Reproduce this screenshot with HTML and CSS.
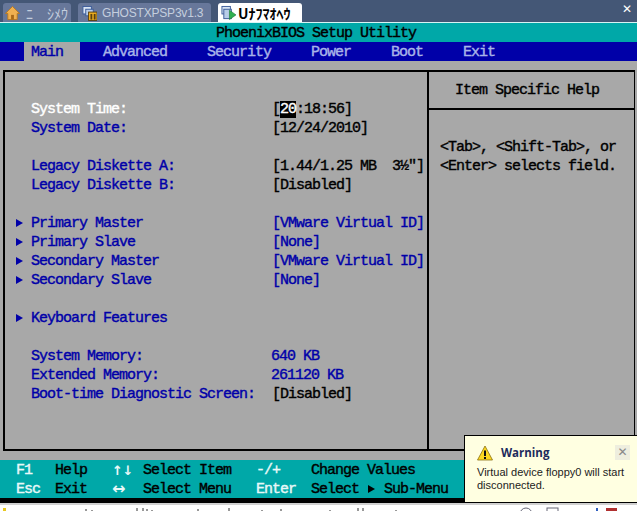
FILE: index.html
```html
<!DOCTYPE html>
<html lang="en">
<head>
    <meta charset="UTF-8">
    <meta name="viewport" content="width=device-width, initial-scale=1.0">
    <title>PhoenixBIOS Setup Utility</title>
    <link rel="stylesheet" href="styles.css">
</head>
<body>
    <div class="tabs">
        <div class="tab">
            <svg class="tab-icon" viewBox="0 0 16 16">
                <path d="M8 1 L15.5 8.5 L13 8.5 L13 15 L3 15 L3 8.5 L0.5 8.5 Z" fill="#f0b050" stroke="#b87a20" stroke-width="1"/>
                <rect x="6.5" y="10" width="3" height="5" fill="#a86818"/>
            </svg>
            <span class="tab-label tab-label-jp">ﾆ　ｼﾒｳ</span>
        </div>
        <div class="tab tab-second">
            <svg class="tab-icon" viewBox="0 0 16 16">
                <rect x="1" y="1" width="9" height="8" fill="#d8e4f4" stroke="#3a5a98"/>
                <rect x="4" y="4" width="8" height="7" fill="#b8cce8" stroke="#3a5a98"/>
                <rect x="7" y="7" width="9" height="9" fill="#f0b020" stroke="#5a4010"/>
                <rect x="9" y="9" width="2" height="6" fill="#5a4010"/>
                <rect x="12.5" y="9" width="2" height="6" fill="#5a4010"/>
            </svg>
            <span class="tab-label">GHOSTXPSP3v1.3</span>
        </div>
        <div class="tab tab-active">
            <svg class="tab-icon" viewBox="0 0 16 16">
                <rect x="1" y="1" width="9" height="8" fill="#d8e4f4" stroke="#3a5a98"/>
                <rect x="3" y="4" width="8" height="10" fill="#b8cce8" stroke="#3a5a98"/>
                <path d="M9 5 L16 10 L9 15 Z" fill="#30b050" stroke="#187030" stroke-width="0.6"/>
            </svg>
            <span class="tab-label">Uﾅﾌﾏｵﾍｳ</span>
        </div>
        <span class="tabs-close">✕</span>
    </div>

    <div class="title">PhoenixBIOS Setup Utility</div>

    <div class="menu">
        <span class="menu-item menu-item-active">Main</span>
        <span class="menu-item">Advanced</span>
        <span class="menu-item">Security</span>
        <span class="menu-item">Power</span>
        <span class="menu-item">Boot</span>
        <span class="menu-item">Exit</span>
    </div>

    <div class="main">
        <div class="panel">
            <div class="fields">
                <div class="row"><span class="label label-current">System Time:</span><span class="value">[<span class="cursor">20</span>:18:56]</span></div>
                <div class="row"><span class="label">System Date:</span><span class="value">[12/24/2010]</span></div>
                <div class="row"></div>
                <div class="row"><span class="label">Legacy Diskette A:</span><span class="value">[1.44/1.25 MB  3½"]</span></div>
                <div class="row"><span class="label">Legacy Diskette B:</span><span class="value">[Disabled]</span></div>
                <div class="row"></div>
                <div class="row"><i class="arrow"></i><span class="label">Primary Master</span><span class="value value-blue">[VMware Virtual ID]</span></div>
                <div class="row"><i class="arrow"></i><span class="label">Primary Slave</span><span class="value value-blue">[None]</span></div>
                <div class="row"><i class="arrow"></i><span class="label">Secondary Master</span><span class="value value-blue">[VMware Virtual ID]</span></div>
                <div class="row"><i class="arrow"></i><span class="label">Secondary Slave</span><span class="value value-blue">[None]</span></div>
                <div class="row"></div>
                <div class="row"><i class="arrow"></i><span class="label">Keyboard Features</span></div>
                <div class="row"></div>
                <div class="row"><span class="label">System Memory:</span><span class="value value-blue value-mem">640 KB</span></div>
                <div class="row"><span class="label">Extended Memory:</span><span class="value value-blue value-mem">261120 KB</span></div>
                <div class="row"><span class="label">Boot-time Diagnostic Screen:</span><span class="value">[Disabled]</span></div>
            </div>
            <div class="help">
                <div class="help-head">Item Specific Help</div>
                <div class="help-body">&lt;Tab&gt;, &lt;Shift-Tab&gt;, or
&lt;Enter&gt; selects field.</div>
            </div>
        </div>
    </div>

    <div class="status">
        <span class="key">F1</span><span>Help</span><span class="key key-arrows">↑↓</span><span>Select Item</span><span class="key">-/+</span><span>Change Values</span>
        <span class="key">Esc</span><span>Exit</span><span class="key key-arrows key-wide">↔</span><span>Select Menu</span><span class="key">Enter</span><span>Select <i class="arrow arrow-black"></i> Sub-Menu</span>
    </div>

    <div class="black-bar"></div>

    <!-- only the top pixels of the vmware status line are in the window -->
    <svg class="hint" viewBox="0 0 637 6">
        <rect x="3" y="3" width="3" height="3" fill="#e8c820"/>
        <path d="M86 4v2M92 5v1M137 3v3M143 3v3M147 4v2M152 5v1M198 4v2M229 3v3M262 5v1M281 4v2M330 5v1M358 3v3M363 3v3M396 5v1" stroke="#333" fill="none"/>
        <circle cx="526" cy="9" r="6" fill="none" stroke="#667"/>
        <rect x="547" y="3" width="11" height="9" fill="none" stroke="#667"/>
        <path d="M597 3v3" stroke="#3060c0" stroke-width="2"/>
        <rect x="606" y="3" width="11" height="9" fill="#b03030"/>
    </svg>

    <div class="toast">
        <div class="toast-head">
            <svg class="toast-icon" viewBox="0 0 16 16">
                <path d="M8 1 L15.5 15 L0.5 15 Z" fill="#fcd820" stroke="#8a7010" stroke-width="0.8" stroke-linejoin="round"/>
                <rect x="7" y="5.5" width="2" height="5.5" fill="#111"/>
                <rect x="7" y="12" width="2" height="2" fill="#111"/>
            </svg>
            <span class="toast-title">Warning</span>
            <span class="toast-close">✕</span>
        </div>
        <div class="toast-text">Virtual device floppy0 will start disconnected.</div>
    </div>
</body>
</html>
```

FILE: styles.css
```css
body {
    margin: 0;
    width: 637px;
    height: 511px;
    overflow: hidden;
    position: relative;
    background: #a8a8a8;
    font-family: 'Liberation Mono', monospace;
    font-size: 15px;
    -webkit-text-stroke: 0.4px;
    letter-spacing: -1px;
    color: #000;
}

/* browser tabs */
.tabs {
    height: 19px;
    padding: 3px 0 0 3px;
    border-bottom: 1px solid #d8f4f4;
    background: #445776;
    display: flex;
    gap: 7px;
    position: relative;
    font-family: 'Liberation Sans', sans-serif;
    font-size: 12px;
    letter-spacing: 0;
    -webkit-text-stroke: 0;
}
.tab {
    width: 68px;
    padding-left: 2px;
    box-sizing: border-box;
    display: flex;
    align-items: center;
    gap: 6px;
    background: #67779a;
    border-radius: 3px 3px 0 0;
    color: #c4cede;
    flex: none;
}
.tab-second {
    width: 133px;
    padding-left: 4px;
    gap: 5px;
}
.tab-active {
    width: 84px;
    padding-left: 3px;
    gap: 2px;
    background: #fff;
    color: #000;
    font-weight: bold;
}
.tab-icon {
    width: 15px;
    height: 16px;
    flex: none;
}
.tab-label {
    white-space: pre;
    letter-spacing: -0.2px;
}
.tab-label-jp, .tab-active .tab-label {
    font-family: 'Noto Sans CJK JP', sans-serif;
    font-size: 14px;
    letter-spacing: 0;
    line-height: 16px;
}
.tabs-close {
    position: absolute;
    right: 5px;
    top: 2px;
    color: #fff;
    font-family: 'DejaVu Sans', sans-serif;
    font-weight: bold;
    font-size: 12px;
}

/* bios header */
.title {
    height: 19px;
    line-height: 21px;
    background: #00a8a8;
    padding-right: 5px;
    text-align: center;
}
.menu {
    height: 19px;
    line-height: 21px;
    background: #0000a8;
    padding-left: 24px;
    display: flex;
    gap: 16px;
    color: #a8b4e8;
}
.menu-item {
    padding: 0 17px 0 7px;
}
.menu-item-active {
    background: #a8a8a8;
    color: #0000a8;
}

/* main panel */
.main {
    height: 399px;
    padding: 9px 2px 0 3px;
    box-sizing: border-box;
}
.panel {
    height: 381px;
    box-sizing: border-box;
    border: 2px solid #000;
    border-width: 2px 1px 2px 2px;
    display: grid;
    grid-template-columns: 423px 1fr;
}
.fields {
    padding: 27px 0 0 26px;
    color: #0000a8;
}
.row {
    height: 19px;
    line-height: 21px;
    display: flex;
    white-space: pre;
}
.label {
    width: 241px;
    flex: none;
}
.label-current {
    color: #fff;
}
.value {
    color: #000;
}
.value-blue {
    color: #0000a8;
}
.value-mem {
    margin-left: -1px;
}
.cursor {
    background: #000;
    color: #fff;
}
.arrow {
    width: 0;
    height: 0;
    align-self: center;
    margin: 0 8px 0 -15px;
    border-left: 7px solid #0000a8;
    border-top: 4px solid transparent;
    border-bottom: 4px solid transparent;
}
.arrow-black {
    display: inline-block;
    margin: 0 1px;
    border-left-color: #000;
}
.help {
    border-left: 2px solid #000;
    margin-left: -1px;
}
.help-head {
    height: 36px;
    line-height: 38px;
    padding-left: 26px;
    border-bottom: 2px solid #000;
    white-space: pre;
}
.help-body {
    padding: 28px 0 0 11px;
    line-height: 19px;
    white-space: pre;
}

/* key help */
.status {
    height: 38px;
    line-height: 21px;
    background: #00a8a8;
    padding-left: 16px;
    display: grid;
    grid-template-columns: 39px 57px 31px 113px 55px 1fr;
    grid-auto-rows: 19px;
    white-space: pre;
}
.key {
    color: #e8f8f8;
}
.key-arrows {
    font-family: 'DejaVu Sans', sans-serif;
    font-size: 13px;
    font-weight: bold;
    letter-spacing: -0.5px;
    -webkit-text-stroke: 0;
}
.key-wide {
    font-size: 16px;
    line-height: 19px;
}
.black-bar {
    height: 5px;
    background: #000;
}

/* vmware status line, mostly cut off by the window */
.hint {
    display: block;
    width: 637px;
    height: 6px;
    border-top: 2px solid #d0d0d0;
    background: #fff;
}

/* warning popup */
.toast {
    position: absolute;
    left: 464px;
    top: 435px;
    width: 173px;
    height: 67px;
    box-sizing: border-box;
    border: 1px solid #000;
    border-width: 1px 0 0 1px;
    background: #ffffe1;
    padding: 8px 7px 0 12px;
    font-family: 'Liberation Sans', sans-serif;
    letter-spacing: 0;
    font-size: 11px;
    -webkit-text-stroke: 0;
    color: #222;
}
.toast-head {
    display: flex;
    align-items: center;
    height: 17px;
}
.toast-icon {
    width: 16px;
    height: 16px;
    flex: none;
}
.toast-title {
    margin-left: 8px;
    font-family: 'Open Sans', sans-serif;
    font-weight: bold;
    font-size: 11.5px;
    color: #1c2a5c;
}
.toast-close {
    margin-left: auto;
    width: 15px;
    height: 15px;
    line-height: 15px;
    text-align: center;
    background: #eeeede;
    color: #888;
    font-family: 'DejaVu Sans', sans-serif;
    font-weight: bold;
    font-size: 12px;
}
.toast-text {
    margin-top: 5px;
    line-height: 13px;
}
```
